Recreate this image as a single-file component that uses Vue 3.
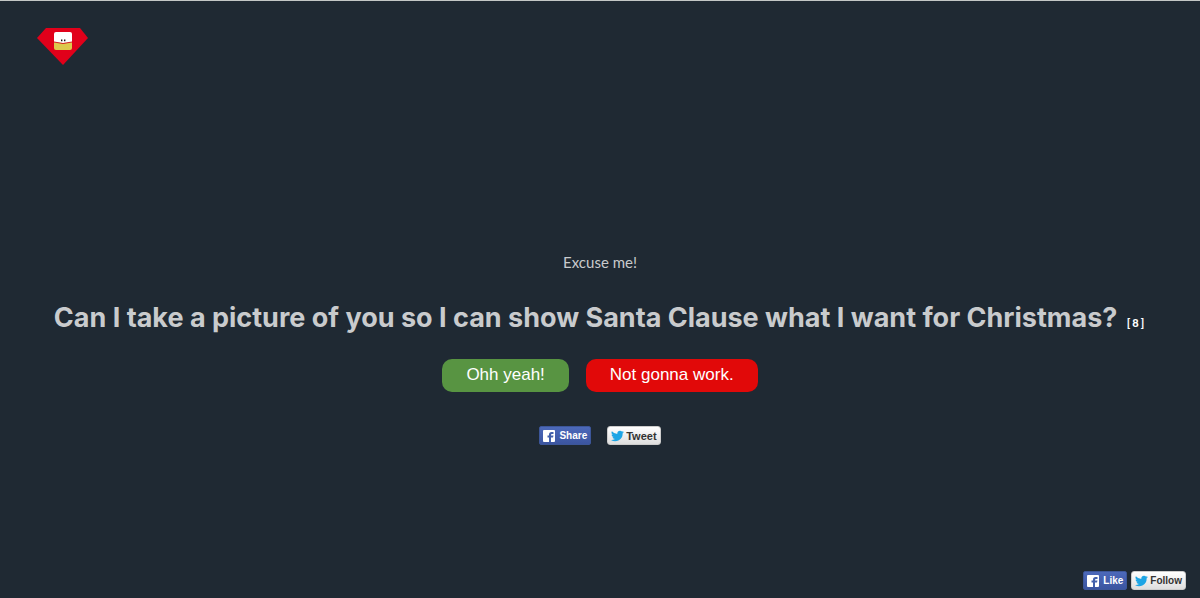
<script setup>
const choices = [
  { label: 'Ohh yeah!', kind: 'yes' },
  { label: 'Not gonna work.', kind: 'no' }
]
const shareLinks = [
  { label: 'Share', kind: 'facebook' },
  { label: 'Tweet', kind: 'twitter' }
]
const followLinks = [
  { label: 'Like', kind: 'facebook' },
  { label: 'Follow', kind: 'twitter' }
]
const groups = { share: shareLinks, follow: followLinks }
</script>

<template>
  <div class="page">
    <header>
      <a class="logo" href="#" aria-label="Home">
        <svg width="52" height="38" viewBox="0 0 52 38" aria-hidden="true">
          <path d="M9 0H43L51 10L26 37L0 10Z" fill="#e1001a" />
          <path d="M17 14H35V20Q35 22 33 22H19Q17 22 17 20Z" fill="#ddc94d" />
          <path d="M19 4H33Q35 4 35 6V14Q26 16 17 14V6Q17 4 19 4Z" fill="#fff" />
          <path d="M17 14Q26 17 35 14" fill="none" stroke="#d31e22" />
          <path d="M24 11.500h1.400v1.800h-1.400zM27 11.500h1.400v1.800h-1.400z" fill="#111" />
        </svg>
      </a>
    </header>

    <main>
      <p class="intro">Excuse me!</p>
      <h1>Can I take a picture of you so I can show Santa Clause what I want for Christmas? <a class="count" href="#">[8]</a></h1>
      <div class="choices">
        <button v-for="c in choices" :key="c.kind" type="button" :class="['choice', c.kind]">{{ c.label }}</button>
      </div>
    </main>

    <nav v-for="(links, name) in groups" :key="name" :class="['social', name]" :aria-label="name">
      <a v-for="l in links" :key="l.label" href="#" :class="['badge', l.kind]">
        <svg v-if="l.kind === 'facebook'" width="12" height="12" viewBox="0 0 12 12" aria-hidden="true">
          <rect width="12" height="12" rx="1" fill="#fff" />
          <path d="M6 12V7.500H4.500V5.500H6V4.500Q6 2 8.500 2H10.500V4H9Q8 4 8 4.800V5.500H10.500L10 7.500H8V12Z" fill="#4260ab" />
        </svg>
        <svg v-else width="13" height="12" viewBox="0 1.500 24 21" aria-hidden="true">
          <path fill="#1da5e5" d="M24 4.600a10 10 0 0 1-2.800.8 5 5 0 0 0 2.100-2.700 10 10 0 0 1-3.100 1.200 4.900 4.900 0 0 0-8.400 4.500A14 14 0 0 1 1.700 3.200a4.900 4.900 0 0 0 1.500 6.500A5 5 0 0 1 1 9.100a4.900 4.900 0 0 0 3.900 4.900 5 5 0 0 1-2.200.1 4.900 4.900 0 0 0 4.600 3.400A10 10 0 0 1 0 19.500a14 14 0 0 0 21.500-12.400A10 10 0 0 0 24 4.600Z" />
        </svg>
        <span>{{ l.label }}</span>
      </a>
    </nav>
  </div>
</template>

<style>
body {
  background: #1f2933;
}
</style>

<style scoped>
.page {
  box-sizing: border-box;
  display: flex;
  flex-direction: column;
  min-height: 100vh;
  border-top: 1px solid #c4c7c6;
  background: #1f2933;
  color: #c9cbcd;
  font-family: "Liberation Sans", Arial, sans-serif;
}

header {
  padding: 27px 37px 0;
}

.logo {
  display: inline-block;
}

.logo svg {
  display: block;
}

main {
  padding: 182px 20px 0;
  text-align: center;
}

.intro {
  margin: 0;
  font: 15px/20px Lato, sans-serif;
}

h1 {
  margin: 26px 0 0;
  font: 700 27px/40px Inter, sans-serif;
}

.count {
  margin-left: 3px;
  color: #fff;
  font: 900 11px/16px Lato, sans-serif;
  letter-spacing: 2px;
  text-decoration: none;
}

.choices {
  display: flex;
  justify-content: center;
  gap: 17px;
  margin-top: 21px;
}

.choice {
  height: 33px;
  padding: 0 24px 2px;
  border: 0;
  border-radius: 10px;
  color: #fff;
  font: 17px/24px "Liberation Sans", Arial, sans-serif;
  cursor: pointer;
}

.yes {
  background: #589442;
}

.no {
  background: #e10909;
}

.social {
  display: flex;
}

.share {
  justify-content: center;
  gap: 16px;
  margin-top: 34px;
}

.follow {
  justify-content: flex-end;
  gap: 4px;
  margin-top: auto;
  padding: 0 14px 8px;
}

.badge {
  box-sizing: border-box;
  display: flex;
  align-items: center;
  gap: 4px;
  height: 19px;
  padding: 0 3px;
  border: 1px solid;
  border-radius: 2px;
  font-size: 11px;
  line-height: 16px;
  font-weight: 700;
  text-decoration: none;
}

.facebook {
  border-color: #3c5699;
  background: linear-gradient(#4c69ba, #3b55a0);
  color: #fff;
  font-size: 10px;
}

.twitter {
  gap: 2px;
  border-color: #ccc;
  border-radius: 3px;
  background: linear-gradient(#fff, #dedede);
  color: #333;
}

.follow .twitter {
  font-size: 10px;
}
</style>
